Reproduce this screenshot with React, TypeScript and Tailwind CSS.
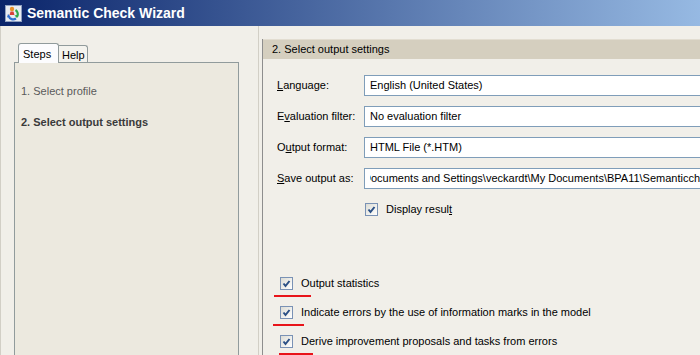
import React from "react";

function CheckBox() {
  return (
    <div className="w-[13px] h-[13px] shrink-0 border border-[#7a92b5] bg-[linear-gradient(135deg,#dcdcd5,#ffffff)] flex items-center justify-center">
      <svg width="11" height="11" viewBox="0 0 11 11">
        <path d="M2.5 5.5 L4.5 8 L8.5 3" fill="none" stroke="#2a4f85" strokeWidth="2" />
      </svg>
    </div>
  );
}

function AppIcon() {
  return (
    <svg width="17" height="17" viewBox="0 0 17 17">
      <rect x="0.5" y="0.5" width="16" height="16" fill="#e9ecf2" stroke="#8fa0c0" />
      <circle cx="7" cy="4" r="2.2" fill="#e8902a" />
      <path d="M4.5 10 L5.5 6.5 L8.5 6.5 L9.5 10 Z" fill="#d8403a" />
      <path d="M10.5 5 A5 5 0 0 1 12 12" fill="none" stroke="#2fa84a" strokeWidth="2.2" />
      <path d="M13.5 9.5 L12 13 L9.5 10.5 Z" fill="#2fa84a" />
      <path d="M11 13.5 A5 5 0 0 1 3.5 11" fill="none" stroke="#2f6fd0" strokeWidth="2.2" />
      <path d="M2 12.5 L3 9 L5.5 11.5 Z" fill="#2f6fd0" />
    </svg>
  );
}

const fields = [
  { pre: "", key: "L", post: "anguage:", value: "English (United States)" },
  { pre: "E", key: "v", post: "aluation filter:", value: "No evaluation filter" },
  { pre: "O", key: "u", post: "tput format:", value: "HTML File (*.HTM)" },
  { pre: "", key: "S", post: "ave output as:", value: "" },
];

const options = [
  { text: "Output statistics", line: "ml-[1px] w-[37px]" },
  { text: "Indicate errors by the use of information marks in the model", line: "ml-0 w-[31px]" },
  { text: "Derive improvement proposals and tasks from errors", line: "ml-[6px] w-[34px]" },
];

export default function App() {
  return (
    <div className="w-[700px] h-[355px] overflow-hidden flex flex-col bg-[#f1efe9] text-[11px] text-black font-['Liberation_Sans',Arial,sans-serif]">
      {/* title bar */}
      <div className="h-[26px] shrink-0 flex items-center gap-[5px] pl-[5px] bg-[linear-gradient(90deg,#0a246a_0%,#a6caf0_111%)]">
        <AppIcon />
        <div className="text-[14px] font-bold text-white leading-none">Semantic Check Wizard</div>
      </div>

      <div className="flex flex-1 min-h-0">
        {/* left: steps */}
        <div className="w-[259px] shrink-0 flex flex-col pt-[17px] pl-[13px] border-l border-r border-[#d2cfc6]">
          <div className="flex items-end h-[19px] ml-[4px]">
            <div className="relative z-10 h-[20px] mb-[-1px] w-[41px] pl-[4px] pt-[2px] bg-[#fcfcfe] border border-b-0 border-[#919b9c] rounded-t-[3px]">
              Steps
            </div>
            <div className="h-[17px] w-[29px] pl-[3px] pt-[1px] bg-[#f4f3ee] border border-b-0 border-l-0 border-[#919b9c] rounded-tr-[3px]">
              Help
            </div>
          </div>
          <div className="w-[225px] flex-1 bg-[#ece9df] border border-[#919b9c] border-b-0 pl-[6px] pt-[22px] flex flex-col gap-[18px] leading-[13px]">
            <div className="text-[#5a5a5a]">1. Select profile</div>
            <div className="font-bold text-[#3a3a3a]">2. Select output settings</div>
          </div>
        </div>

        {/* right: output settings */}
        <div className="flex-1 min-w-0 ml-[3px] mt-[13px] flex flex-col border-l border-[#8e8e8e]">
          <div className="h-[20px] shrink-0 flex items-center pl-[9px] bg-[#d5cfbf] border-t border-[#e2ddd1]">
            2. Select output settings
          </div>

          <div className="flex flex-col gap-[10px] pl-[14px] pt-[16px]">
            {fields.map((f) => (
              <div key={f.post} className="flex items-center h-[21px]">
                <div className="w-[87px] shrink-0">
                  {f.pre}
                  <u>{f.key}</u>
                  {f.post}
                </div>
                <div className="w-[400px] shrink-0 h-full border border-[#7f9db9] bg-white flex items-center pl-[5px]">
                  {f.value ? (
                    <span className="whitespace-nowrap">{f.value}</span>
                  ) : (
                    <div className="flex-1 min-w-0 overflow-hidden whitespace-nowrap">
                      <span className="inline-block ml-[-7px]">
                        {"Documents and Settings\\veckardt\\My Documents\\BPA11\\Semanticcheck"}
                      </span>
                    </div>
                  )}
                </div>
              </div>
            ))}
          </div>

          <div className="flex items-center gap-[8px] pl-[102px] mt-[12px]">
            <CheckBox />
            <div>
              Display resul<u>t</u>
            </div>
          </div>

          <div className="flex flex-col pl-[10px] mt-[59px]">
            {options.map((o) => (
              <div key={o.text} className="flex flex-col mb-[9px]">
                <div className="flex items-center gap-[8px] ml-[7px] h-[13px]">
                  <CheckBox />
                  <div className="whitespace-nowrap">{o.text}</div>
                </div>
                <div className={"h-[2px] mt-[5px] bg-[#e8141a] " + o.line}></div>
              </div>
            ))}
          </div>
        </div>
      </div>
    </div>
  );
}
